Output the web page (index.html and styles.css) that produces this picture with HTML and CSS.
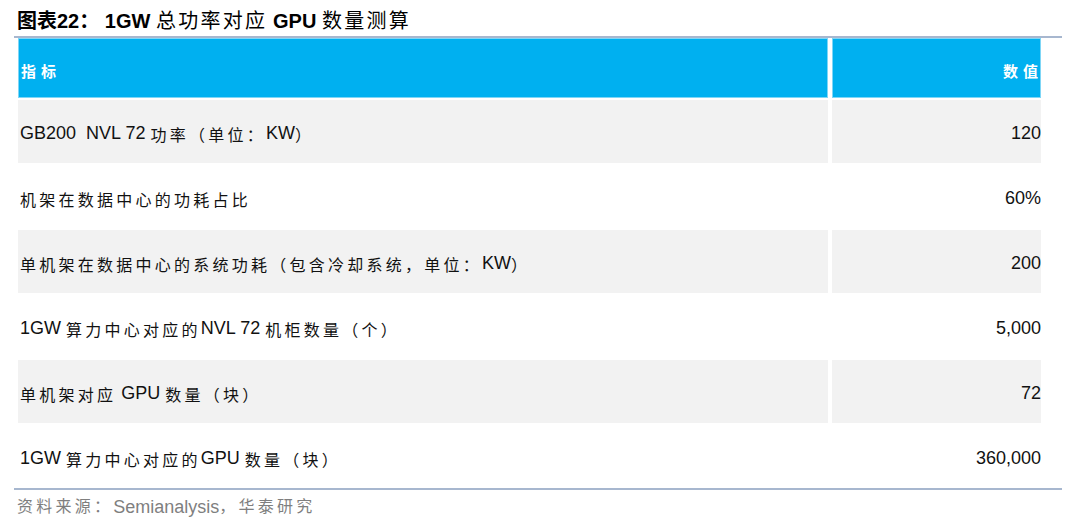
FILE: index.html
```html
<!DOCTYPE html>
<html lang="zh">
<head>
<meta charset="utf-8">
<title>1GW 总功率对应 GPU 数量测算</title>
<link rel="stylesheet" href="styles.css">
</head>
<body>
<div class="page">
  <h1 class="title"><span class="tb">图表</span>22<span class="tb">：</span> 1GW <span class="tz">总功率对应</span> GPU <span class="tz">数量测算</span></h1>
  <div class="rule"></div>
  <div class="tbl">
    <div class="hd c1"><span class="hz">指标</span></div>
    <div class="hd c2"><span class="hz">数值</span></div>

    <div class="cell c1 g">GB200&nbsp; NVL 72 <span class="zh">功率（单位：</span>KW<span class="zh">）</span></div>
    <div class="cell c2 g">120</div>

    <div class="cell c1"><span class="zh">机架在数据中心的功耗占比</span></div>
    <div class="cell c2">60%</div>

    <div class="cell c1 g"><span class="zh">单机架在数据中心的系统功耗（包含冷却系统，单位：</span>KW<span class="zh">）</span></div>
    <div class="cell c2 g">200</div>

    <div class="cell c1">1GW <span class="zh">算力中心对应的</span>NVL 72 <span class="zh">机柜数量（个）</span></div>
    <div class="cell c2">5,000</div>

    <div class="cell c1 g"><span class="zh">单机架对应</span> GPU <span class="zh">数量（块）</span></div>
    <div class="cell c2 g">72</div>

    <div class="cell c1">1GW <span class="zh">算力中心对应的</span>GPU <span class="zh">数量（块）</span></div>
    <div class="cell c2">360,000</div>
  </div>
  <div class="rule"></div>
  <p class="src"><span class="zh">资料来源：</span>Semianalysis<span class="zh">，华泰研究</span></p>
</div>
</body>
</html>
```
FILE: styles.css
```css
html, body {
  margin: 0;
  padding: 0;
  background: #ffffff;
}
body {
  font-family: "Liberation Sans", Arial, "Noto Sans CJK SC", sans-serif;
  color: #111111;
}
.page {
  width: 1048px;
  margin-left: 14px;
}
.title {
  margin: 0;
  padding: 8px 0 0 3px;
  height: 24px;
  line-height: 24px;
  font-size: 20px;
  font-weight: 700;
  color: #000;
  white-space: nowrap;
}
.title .tb {
  font-family: "Noto Sans CJK SC", sans-serif;
  font-weight: 700;
}
.title .tz {
  font-family: "Noto Sans CJK SC", sans-serif;
  font-weight: 400;
  font-size: 20px;
  letter-spacing: 2.3px;
}
.rule {
  height: 2px;
  background: #a7b7cf;
  margin-top: 4px;
}
.tbl + .rule {
  margin-top: 0;
}
.tbl {
  margin-left: 4px;
  width: 1023px;
  display: grid;
  grid-template-columns: 810px 209px;
  grid-template-rows: 60px repeat(6, 63px);
  column-gap: 4px;
  row-gap: 2px;
}
.hd {
  background: #00b0f0;
  border: 1px solid #7fd6f6;
  display: flex;
  align-items: center;
  padding-top: 4px;
  box-sizing: border-box;
  color: #ffffff;
}
.hd.c1 {
  padding-left: 2px;
}
.hd.c2 {
  justify-content: flex-end;
  padding-right: 0;
}
.hz {
  font-family: "Noto Sans CJK SC", sans-serif;
  font-size: 15px;
  font-weight: 700;
  letter-spacing: 5px;
}
.hd.c2 .hz {
  margin-right: -3px;
}
.cell {
  display: flex;
  align-items: center;
  padding-top: 4px;
  box-sizing: border-box;
  font-size: 18px;
  white-space: pre;
}
.cell.c1 {
  padding-left: 2px;
}
.cell.c2 {
  justify-content: flex-end;
}
.g {
  background: #f2f2f2;
}
.zh {
  font-family: "Noto Sans CJK SC", sans-serif;
  font-size: 16px;
  letter-spacing: 3.25px;
  vertical-align: 1px;
}
.src {
  margin: 0;
  padding: 4px 0 0 3px;
  font-size: 18px;
  line-height: 22px;
  color: #7f7f7f;
  white-space: nowrap;
}
```
